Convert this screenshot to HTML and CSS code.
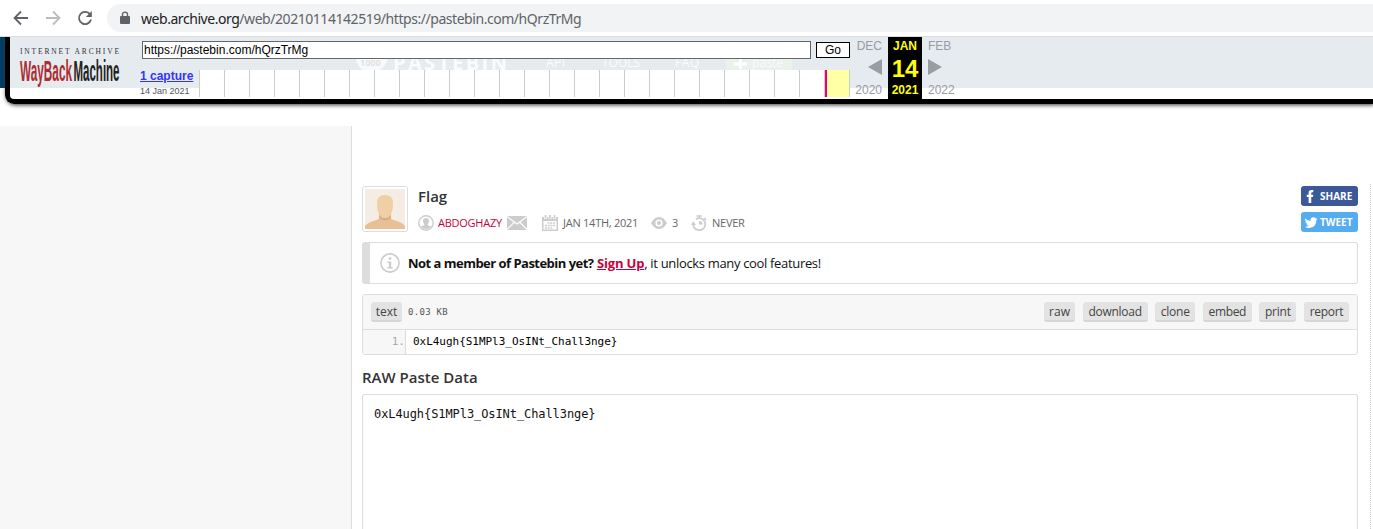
FILE: index.html
```html
<!DOCTYPE html>
<html lang="en">
<head>
<meta charset="utf-8">
<title>Flag - Pastebin</title>
<link rel="stylesheet" href="styles.css">
</head>
<body>
<header class="browser">
  <svg class="nav-icon" viewBox="0 0 16 16"><path d="M15 8H2M8 1.5L1.5 8L8 14.5"/></svg>
  <svg class="nav-icon disabled" viewBox="0 0 16 16"><path d="M1 8H14M8 1.5L14.5 8L8 14.5"/></svg>
  <svg class="nav-icon" viewBox="0 0 16 16"><path d="M13 4.3A6.1 6.1 0 1 0 14 9.6"/><path class="solid" d="M14.8 1V7H8.8Z"/></svg>
  <div class="address">
    <svg class="lock" viewBox="0 0 10 14"><path d="M2.5 6V3.6a2.5 2.5 0 0 1 5 0V6" fill="none" stroke="#5f6368" stroke-width="1.4"/><rect x="0" y="5" width="10" height="8" rx="1" fill="#5f6368"/></svg>
    <span class="url"><span class="host">web.archive.org</span>/web/20210114142519/https://pastebin.com/hQrzTrMg</span>
  </div>
</header>
<div class="site-header">
  <div class="wayback">
    <svg class="wb-logo" viewBox="0 0 104 42">
      <text class="ia" x="2" y="8" textLength="99">INTERNET ARCHIVE</text>
      <text class="way" transform="translate(2 35) scale(1 2.15)" textLength="52" lengthAdjust="spacingAndGlyphs">WayBack</text>
      <text class="machine" transform="translate(55.5 35) scale(1 2.15)" textLength="46" lengthAdjust="spacingAndGlyphs">Machine</text>
    </svg>
    <div class="wb-main">
      <div class="wb-form"><div class="wb-url">https://pastebin.com/hQrzTrMg</div><div class="wb-go">Go</div></div>
      <svg class="ghost" viewBox="0 0 710 11">
        <path d="M216 0H248Q245 8 239 11H223Q217 7 216 0Z" fill="#f8f9fa"/>
        <text x="220" y="7" class="digits">1000</text>
        <text x="253" y="11" class="brand" textLength="114">PASTEBIN</text>
        <text x="406" y="8" textLength="19">API</text><text x="462" y="8" textLength="38">TOOLS</text><text x="535" y="8" textLength="24">FAQ</text>
        <rect x="586" y="0" width="66" height="11" fill="#e9f2ed"/><path d="M594 5H607M600.5 0V10" stroke="#fff" stroke-width="3"/>
        <text x="612" y="8" textLength="31">paste</text>
      </svg>
      <div class="wb-bottom">
        <div class="captures"><a>1 capture</a><span>14 Jan 2021</span></div>
        <div class="timeline"><i></i></div>
      </div>
    </div>
    <div class="wb-dates">
      <div class="date prev"><span>DEC</span><svg viewBox="0 0 14 16"><path d="M14 0V16L0 8Z"/></svg><span>2020</span></div>
      <div class="date now"><b>JAN</b><strong>14</strong><b>2021</b></div>
      <div class="date next"><span>FEB</span><svg viewBox="0 0 14 16"><path d="M0 0V16L14 8Z"/></svg><span>2022</span></div>
    </div>
  </div>
</div>
<div class="page">
  <aside class="sidebar"></aside>
  <main class="content">
    <section class="paste-head">
      <div class="avatar"><svg viewBox="0 0 40 40"><rect width="40" height="40" fill="#f5ece3"/><path d="M0 40V37Q3 33 10 31.5Q15 30 15 27H25Q25 30 30 31.5Q37 33 40 37V40Z" fill="#e8bf97"/><path d="M14 25H26V29Q20 34 14 29Z" fill="#d7b089"/><path d="M12 14Q12 6 20 6Q28 6 28 14Q28 29 20 29Q12 29 12 14Z" fill="#f1cfa5"/></svg></div>
      <div class="info">
        <h1>Flag</h1>
        <div class="meta">
          <svg class="user-icon" viewBox="0 0 16 16"><circle cx="8" cy="8" r="7.2" fill="none" stroke="#ccc" stroke-width="1.4"/><path d="M8 3C10 3 11 4.2 11 6Q11 8 9.7 9.3V10.2Q12.7 10.9 13 12Q11 14 8 14T3 12Q3.3 10.9 6.3 10.2V9.3Q5 8 5 6C5 4.2 6 3 8 3Z" fill="#ccc"/></svg>
          <a class="user">ABDOGHAZY</a>
          <svg class="mail-icon" viewBox="0 0 20 14"><rect width="20" height="14" fill="#ccc"/><path d="M0 .5L10 8L20 .5M0 13.5L7.5 6M20 13.5L12.5 6" fill="none" stroke="#fff" stroke-width="1.1"/></svg>
          <svg class="cal-icon" viewBox="0 0 16 16"><path d="M0 2H16V16H0Z" fill="#ccc"/><path d="M1.5 6H14.5V14.5H1.5Z" fill="#fff"/><path d="M3.5 0V4M8 0V4M12.5 0V4" stroke="#fff" stroke-width="3"/><path d="M3.5 0V3.5M8 0V3.5M12.5 0V3.5" stroke="#ccc" stroke-width="1.7"/><path d="M5.5 8H13M3 10.5H13M3 13H10.5" stroke="#ccc" stroke-width="1.7" stroke-dasharray="2 .7"/></svg>
          <span class="day">JAN 14TH, 2021</span>
          <svg class="eye-icon" viewBox="0 0 16 12"><path d="M0 6Q3.5 0 8 0T16 6Q12.5 12 8 12T0 6Z" fill="#ccc"/><circle cx="8" cy="6" r="3.6" fill="#fff"/><circle cx="8" cy="6" r="2.1" fill="#ccc"/></svg>
          <span class="views">3</span>
          <svg class="timer-icon" viewBox="0 0 16 16"><path d="M5.5 1H11M8.2 1V4M13 3L15 5M2.4 8A6 6 0 1 0 5 4.2" fill="none" stroke="#ccc" stroke-width="1.7"/><path d="M8 6V9.5H11.7A3.6 3.6 0 0 0 8 6ZM0 10L2.2 6.3L5 10Z" fill="#ccc"/></svg>
          <span class="never">NEVER</span>
        </div>
      </div>
      <div class="social">
        <a class="share"><svg viewBox="0 0 16 16"><path d="M6 15V8.5H4V6H6V4Q6 1 9 1H11V3.5H9.7Q8.8 3.5 8.8 4.5V6H11L10.6 8.5H8.8V15Z"/></svg><span>SHARE</span></a>
        <a class="tweet"><svg viewBox="0 0 16 16"><path d="M2 3.5Q4.5 6.5 8 6.5Q7.5 2.7 11 2.5Q12.3 2.5 13.2 3.4L15 2.8L14 4.5L15.5 4.2L14.2 5.7Q14.2 13.5 6.5 13.8Q4 13.8 2 12.5Q4.4 12.5 6 11.4Q4 11 3.4 9.4H4.6Q2.5 8.7 2.3 6.5L3.4 6.9Q1.5 5.2 2 3.5Z"/></svg><span>TWEET</span></a>
      </div>
    </section>
    <section class="notice">
      <svg viewBox="0 0 20 20"><circle cx="10" cy="10" r="9.1" fill="none" stroke="#ccc" stroke-width="1.6"/><circle cx="10" cy="5.6" r="1.4" fill="#ccc"/><path d="M7.5 8.5H11.2V14H12.8V15.4H7.3V14H9V9.9H7.5Z" fill="#ccc"/></svg>
      <span><b class="lead">Not a member of Pastebin yet?</b> <a>Sign Up</a><span class="tail">, it unlocks many cool features!</span></span>
    </section>
    <section class="code">
      <div class="code-bar">
        <a class="btn text">text</a><span class="size">0.03 KB</span>
        <nav><a class="btn raw">raw</a><a class="btn download">download</a><a class="btn clone">clone</a><a class="btn embed">embed</a><a class="btn print">print</a><a class="btn report">report</a></nav>
      </div>
      <div class="source"><span class="num">1.</span><code>0xL4ugh{S1MPl3_OsINt_Chall3nge}</code></div>
    </section>
    <h2>RAW Paste Data</h2>
    <div class="raw-data">0xL4ugh{S1MPl3_OsINt_Chall3nge}</div>
  </main>
  <div class="rail"></div>
</div>
</body>
</html>
```

FILE: styles.css
```css
* { box-sizing: border-box; }
body { margin: 0; height: 529px; overflow: hidden; background: #fff; font-family: "Open Sans", "Noto Sans", sans-serif; display: flex; flex-direction: column; }
svg { display: block; flex: none; }
a { text-decoration: none; }

.browser { height: 37px; flex: none; display: flex; align-items: center; padding-left: 13px; border-bottom: 1px solid #dadce0; }
.nav-icon { width: 16px; height: 16px; margin-right: 16px; fill: none; stroke: #5f6368; stroke-width: 1.8; }
.nav-icon .solid { fill: #5f6368; stroke: none; }
.nav-icon.disabled { stroke: #babcbe; }
.address { flex: 1; height: 28px; margin: 0 -20px 0 -2px; background: #f1f3f4; border-radius: 14px; display: flex; align-items: center; padding-left: 13px; }
.lock { width: 10px; height: 14px; margin-right: 11px; }
.url { font: 14px "Noto Sans", sans-serif; color: #5f6368; white-space: nowrap; letter-spacing: -.45px; }
.host { color: #202124; }

.site-header { height: 89px; flex: none; background: linear-gradient(#023f66 51px, #fff 51px); padding-left: 5px; }
.wayback { height: 67px; border: solid #000; border-width: 0 0 5px 5px; border-radius: 0 0 0 9px; box-shadow: 1px 1px 4px #333; clip-path: inset(0 0 -10px -10px); background: linear-gradient(#e6ebef 51px, #fff 51px); display: flex; font-family: "Liberation Sans", Arial, sans-serif; }
.wb-logo { width: 104px; height: 42px; margin: 9px 18px 0 8px; overflow: visible; }
.ia { font: 7.5px "Liberation Serif", serif; fill: #333; }
.way, .machine { font: bold 14px "Liberation Sans", sans-serif; fill: #ab2e33; }
.machine { fill: #222; }
.wb-main { width: 710px; flex: none; }
.wb-form { display: flex; gap: 5px; padding: 4px 0 0 2px; }
.wb-url { width: 669px; height: 18px; border: 1px solid #666; background: #fff; font-size: 12px; line-height: 16px; padding-left: 1px; }
.wb-go { width: 34px; height: 16px; margin-top: 1px; border: 1px solid #000; background: #fff; font-size: 12px; line-height: 14px; text-align: center; }
.ghost { width: 710px; height: 11px; fill: #fafbfc; font: 12px "Open Sans", sans-serif; }
.brand { font: bold 20px "Open Sans", sans-serif; }
.digits { font: bold 9px "Open Sans", sans-serif; fill: #e0e2e5; }
.wb-bottom { display: flex; height: 29px; }
.captures { width: 59px; display: flex; flex-direction: column; white-space: nowrap; font-size: 9px; line-height: 11px; color: #555; }
.captures a { font-size: 12px; font-weight: bold; line-height: 13px; color: #33f; text-decoration: underline; margin-bottom: 3px; }
.timeline { width: 651px; height: 27px; background: repeating-linear-gradient(to right, #ccc 0 1px, #fff 1px 25px); margin-bottom: 2px; display: flex; justify-content: flex-end; padding-right: 1px; }
.timeline i { width: 24px; border-left: 2px solid #e6007e; background: #ffffa5; }
.wb-dates { display: flex; color: #99a; font-size: 12px; }
.date { height: 62px; display: flex; flex-direction: column; align-items: flex-end; padding-top: 2px; line-height: 14px; }
.date svg { width: 14px; height: 16px; fill: #999da1; margin: 6px 0 8px; }
.prev { width: 32px; }
.now { width: 34px; margin: 0 6px; background: #000; color: #ff0; align-items: center; }
.now strong { font-size: 24px; line-height: 30px; padding-top: 1px; height: 30px; }
.next { align-items: flex-start; }

.page { flex: 1; display: flex; min-height: 0; }
.sidebar { width: 351px; flex: none; background: #f7f7f7; }
.content { flex: 1; border-left: 1px solid #ddd; padding: 60px 12px 0 10px; display: flex; flex-direction: column; min-width: 0; }
.rail { width: 3px; margin-top: 58px; border-left: 1px dotted #ccc; }
.paste-head { height: 56px; flex: none; display: flex; }
.avatar { width: 46px; height: 46px; padding: 2px; border: 1px solid #ddd; border-radius: 3px; }
.info { padding-left: 10px; flex: 1; }
h1, h2 { margin: 0; color: #333; font-weight: 600; font-size: 15px; line-height: 22px; }
h1 { line-height: 20px; }
.meta { display: flex; align-items: center; height: 20px; margin-top: 7px; font-size: 11px; color: #666; white-space: nowrap; letter-spacing: -.25px; }
.meta > a, .meta > span { line-height: 16px; padding-bottom: 1px; }
.user-icon { width: 16px; height: 16px; margin-right: 4px; }
.user { color: #c8003c; width: 64px; margin-right: 5px; }
.mail-icon { width: 20px; height: 14px; margin-right: 15px; }
.cal-icon { width: 16px; height: 16px; margin-right: 5px; }
.day { width: 76px; margin-right: 12px; }
.eye-icon { width: 16px; height: 12px; margin-right: 5px; }
.views { width: 7px; margin-right: 12px; }
.timer-icon { width: 16px; height: 16px; margin-right: 5px; }
.social { width: 57px; display: flex; flex-direction: column; gap: 6px; }
.social a { height: 20px; border-radius: 3px; display: flex; align-items: center; padding-left: 2px; color: #fff; background: #3b5998; font-size: 10px; font-weight: 700; }
.social .tweet { background: #55acee; }
.social svg { width: 15px; height: 15px; fill: #fff; margin-right: 2px; }
.notice { height: 42px; flex: none; border: 1px solid #ddd; border-left: 8px solid #ddd; border-radius: 3px; display: flex; align-items: center; padding-left: 10px; font-size: 13px; color: #111; white-space: nowrap; }
.notice svg { width: 20px; height: 20px; margin-right: 8px; }
.notice a { color: #c8003c; font-weight: 700; text-decoration: underline; letter-spacing: -.15px; }
.lead { letter-spacing: -.52px; }
.tail { letter-spacing: -.33px; }
.code { height: 61px; flex: none; margin-top: 10px; border: 1px solid #ddd; border-radius: 3px; overflow: hidden; }
.code-bar { height: 35px; background: #f7f7f7; border-bottom: 1px solid #ddd; display: flex; align-items: center; padding: 0 8px; }
.btn { height: 20px; background: #e3e3e3; border-bottom: 2px solid #d6d6d6; border-radius: 3px; color: #444; font-size: 12px; line-height: 19px; text-align: center; }
.text, .raw { width: 31px; }
.download { width: 65px; letter-spacing: -.25px; }
.clone { width: 40px; letter-spacing: -.25px; }
.embed { width: 49px; letter-spacing: -.35px; }
.print { width: 37px; letter-spacing: -.2px; }
.report { width: 45px; letter-spacing: -.3px; }
.size { font: 9px "DejaVu Sans Mono", monospace; color: #555; margin-left: 6px; letter-spacing: .3px; }
nav { margin-left: auto; display: flex; gap: 7.6px; }
.source { display: flex; height: 24px; font: 11px/24px "DejaVu Sans Mono", monospace; }
.num { width: 43px; background: #f7f7f7; border-right: 1px solid #ddd; color: #aaa; text-align: right; }
code { font: inherit; margin-left: 7px; color: #000; letter-spacing: -.03px; }
h2 { margin-top: 11px; }
.raw-data { flex: 1; margin-top: 6px; border: 1px solid #ddd; border-bottom: 0; border-radius: 3px 3px 0 0; padding: 9px 11px; font: 12px/20px "DejaVu Sans Mono", monospace; color: #111; letter-spacing: -.08px; }
```
